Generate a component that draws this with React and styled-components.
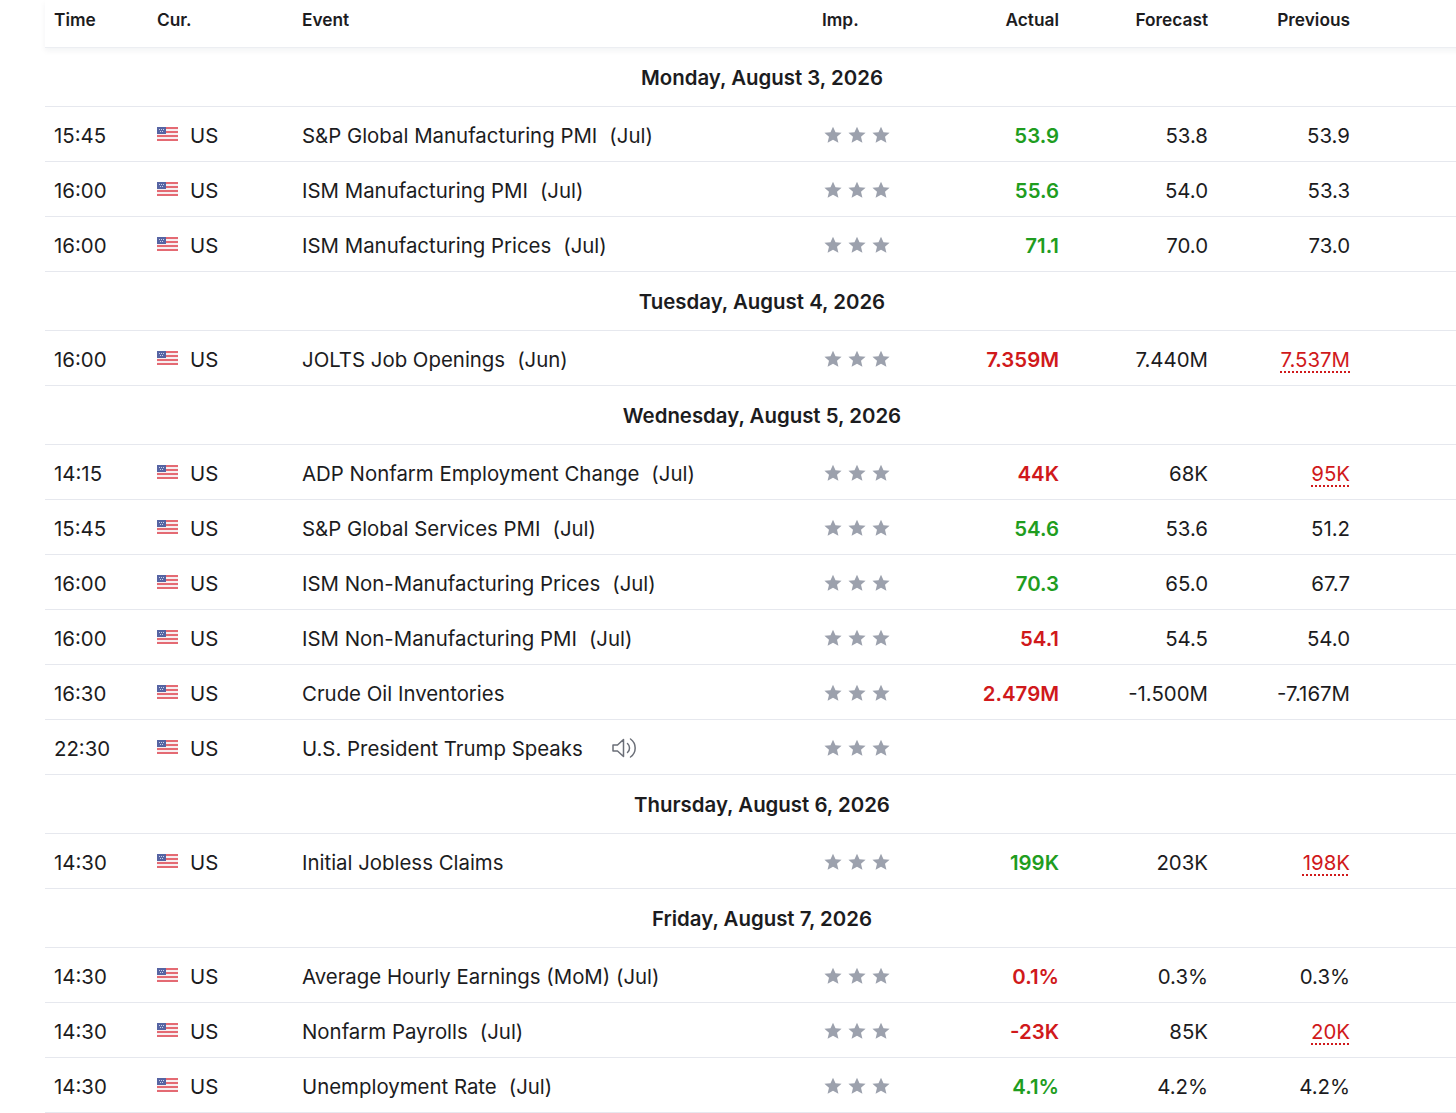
import styled, { createGlobalStyle } from 'styled-components';

const GlobalStyle = createGlobalStyle`
  html, body {
    margin: 0;
    padding: 0;
    background: #fff;
    overflow: hidden;
  }
  body {
    font-family: Inter, 'Noto Sans', sans-serif;
    color: #1c1c1e;
  }
`;

const COLS = '103px 145px 520px 107px 148px 149px 142px 120px';

const Page = styled.div`
  padding-left: 45px;
  width: 1434px;
`;

const HeaderRow = styled.div`
  display: grid;
  grid-template-columns: ${COLS};
  height: 48px;
  align-items: center;
  padding-bottom: 9px;
  border-bottom: 1px solid #eceef2;
  box-shadow: 0 3px 6px rgba(20, 30, 60, 0.05);
  font-size: 17.3px;
  font-weight: 600;
  box-sizing: border-box;
  position: relative;
  z-index: 1;
`;

const HeadCell = styled.div`
  padding: 0 9px;
  text-align: ${(p) => (p.$right ? 'right' : 'left')};
`;

const DateRow = styled.div`
  height: 59px;
  display: flex;
  align-items: center;
  justify-content: center;
  border-bottom: 1px solid #e6e8ee;
  box-sizing: border-box;
  font-size: 20.4px;
  font-weight: 600;
  padding-top: 1px;
`;

const Row = styled.div`
  display: grid;
  grid-template-columns: ${COLS};
  height: 55px;
  align-items: center;
  padding-top: 3px;
  border-bottom: 1px solid #e6e8ee;
  box-sizing: border-box;
  font-size: 20.4px;
  line-height: 25px;
`;

const Cell = styled.div`
  padding: 0 9px;
  height: 25px;
  display: flex;
  align-items: center;
  justify-content: ${(p) => (p.$right ? 'flex-end' : 'flex-start')};
  white-space: nowrap;
`;

const Flag = styled.svg`
  display: block;
  width: 21px;
  height: 14px;
  margin-right: 12px;
  flex-shrink: 0;
  margin-top: -3px;
`;

const Period = styled.span`
  margin-left: 12px;
`;

const Speaker = styled.svg`
  width: 28px;
  height: 28px;
  margin-left: 27px;
  margin-top: -2px;
`;

const Stars = styled.div`
  display: flex;
  gap: 4px;
  padding-left: 1px;
  margin-top: -2px;
`;

const Value = styled.span`
  color: ${(p) => (p.$tone === 'up' ? '#1f9d1f' : p.$tone === 'down' ? '#d0191b' : '#1c1c1e')};
  font-weight: ${(p) => (p.$bold ? 600 : 400)};
  text-decoration: ${(p) => (p.$revised ? 'underline dotted' : 'none')};
  text-decoration-color: #d0191b;
  text-underline-offset: 4px;
  text-decoration-thickness: 1.5px;
`;

function UsFlag() {
  const stripes = [];
  for (let i = 0; i < 4; i++) {
    stripes.push(<rect key={i} x='0' y={i * 4} width='21' height='2' fill='#e46a73' />);
  }
  return (
    <Flag viewBox='0 0 21 14'>
      <rect width='21' height='14' fill='#f7eef0' />
      {stripes}
      <rect x='0' y='0' width='9' height='7' fill='#5664a3' />
      <rect x='2' y='2' width='1' height='1' fill='#c9cfe8' />
      <rect x='4' y='2' width='1' height='1' fill='#c9cfe8' />
      <rect x='6' y='2' width='1' height='1' fill='#c9cfe8' />
      <rect x='3' y='4' width='1' height='1' fill='#c9cfe8' />
      <rect x='5' y='4' width='1' height='1' fill='#c9cfe8' />
    </Flag>
  );
}

function Star() {
  return (
    <svg width='20' height='20' viewBox='0 0 24 24'>
      <path
        d='M12 2l3 6.8 7.3.6-5.5 4.8 1.7 7.2L12 17.6l-6.5 3.8 1.7-7.2L1.7 9.4 9 8.8z'
        fill='#9ca1ad'
      />
    </svg>
  );
}

function SpeakerIcon() {
  return (
    <Speaker viewBox='0 0 28 28' fill='none' stroke='#6b6f78' strokeWidth='1.5' strokeLinecap='round' strokeLinejoin='round'>
      <path d='M3 11h4.5l6-5.5v17l-6-5.5H3z' />
      <path d='M17.5 9.5a6 6 0 0 1 0 9' />
      <path d='M20.5 5a11 11 0 0 1 0 18' />
    </Speaker>
  );
}

const days = [
  {
    date: 'Monday, August 3, 2026',
    rows: [
      ['15:45', 'S&P Global Manufacturing PMI', '(Jul)', '53.9', 'up', '53.8', '53.9'],
      ['16:00', 'ISM Manufacturing PMI', '(Jul)', '55.6', 'up', '54.0', '53.3'],
      ['16:00', 'ISM Manufacturing Prices', '(Jul)', '71.1', 'up', '70.0', '73.0'],
    ],
  },
  {
    date: 'Tuesday, August 4, 2026',
    rows: [['16:00', 'JOLTS Job Openings', '(Jun)', '7.359M', 'down', '7.440M', '7.537M', true]],
  },
  {
    date: 'Wednesday, August 5, 2026',
    rows: [
      ['14:15', 'ADP Nonfarm Employment Change', '(Jul)', '44K', 'down', '68K', '95K', true],
      ['15:45', 'S&P Global Services PMI', '(Jul)', '54.6', 'up', '53.6', '51.2'],
      ['16:00', 'ISM Non-Manufacturing Prices', '(Jul)', '70.3', 'up', '65.0', '67.7'],
      ['16:00', 'ISM Non-Manufacturing PMI', '(Jul)', '54.1', 'down', '54.5', '54.0'],
      ['16:30', 'Crude Oil Inventories', '', '2.479M', 'down', '-1.500M', '-7.167M'],
      ['22:30', 'U.S. President Trump Speaks', '', '', '', '', '', false, true],
    ],
  },
  {
    date: 'Thursday, August 6, 2026',
    rows: [['14:30', 'Initial Jobless Claims', '', '199K', 'up', '203K', '198K', true]],
  },
  {
    date: 'Friday, August 7, 2026',
    rows: [
      ['14:30', 'Average Hourly Earnings (MoM) (Jul)', '', '0.1%', 'down', '0.3%', '0.3%'],
      ['14:30', 'Nonfarm Payrolls', '(Jul)', '-23K', 'down', '85K', '20K', true],
      ['14:30', 'Unemployment Rate', '(Jul)', '4.1%', 'up', '4.2%', '4.2%'],
    ],
  },
];

export default function App() {
  return (
    <Page>
      <GlobalStyle />
      <HeaderRow>
        <HeadCell>Time</HeadCell>
        <HeadCell>Cur.</HeadCell>
        <HeadCell>Event</HeadCell>
        <HeadCell>Imp.</HeadCell>
        <HeadCell $right>Actual</HeadCell>
        <HeadCell $right>Forecast</HeadCell>
        <HeadCell $right>Previous</HeadCell>
        <HeadCell />
      </HeaderRow>
      {days.map((day) => (
        <div key={day.date}>
          <DateRow>{day.date}</DateRow>
          {day.rows.map(([time, name, period, actual, tone, forecast, previous, revised, speech], i) => (
            <Row key={i}>
              <Cell>{time}</Cell>
              <Cell>
                <UsFlag />
                US
              </Cell>
              <Cell>
                {name}
                {period && <Period>{period}</Period>}
                {speech && <SpeakerIcon />}
              </Cell>
              <Cell>
                <Stars>
                  <Star />
                  <Star />
                  <Star />
                </Stars>
              </Cell>
              <Cell $right>
                <Value $tone={tone} $bold>{actual}</Value>
              </Cell>
              <Cell $right>
                <Value>{forecast}</Value>
              </Cell>
              <Cell $right>
                <Value $tone={revised ? 'down' : ''} $revised={revised}>{previous}</Value>
              </Cell>
              <Cell />
            </Row>
          ))}
        </div>
      ))}
    </Page>
  );
}
